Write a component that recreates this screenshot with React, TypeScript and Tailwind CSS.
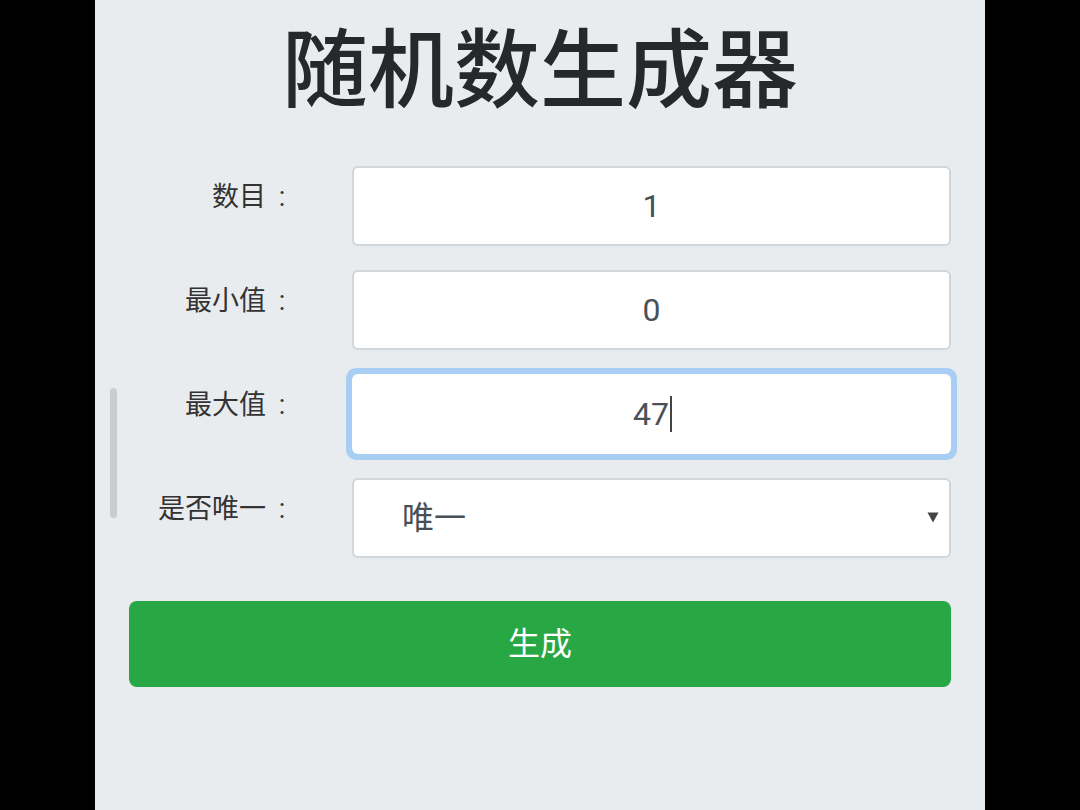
import React from "react";

const font = { fontFamily: '"Roboto", "Noto Sans CJK SC", sans-serif' };

const fields = [
  { label: "数目", value: "1" },
  { label: "最小值", value: "0" },
];

const Label = ({ text }: { text: string }) => (
  <div className="flex h-[80px] items-center justify-end pb-[18px] pr-[57px] text-[27px] text-[#333]">
    {text}
    <span className="inline-block w-[29px] pl-[3px] text-center">:</span>
  </div>
);

const App = () => {
  return (
    <div className="flex min-h-[810px] w-full justify-center bg-black" style={font}>
      <div className="relative w-[890px] bg-[#e9ecef] px-[34px] pt-[18px]">
        {/* scroll indicator */}
        <div className="absolute left-[15px] top-[388px] h-[130px] w-[7px] rounded-full bg-[#c9cdd1]" />

        <h1 className="text-center text-[86px] font-medium leading-[108px] text-[#26292c]">
          随机数生成器
        </h1>

        <div className="mt-[40px] grid grid-cols-[223px_599px] gap-y-[24px]">
          {fields.map((f) => (
            <React.Fragment key={f.label}>
              <Label text={f.label} />
              <input
                readOnly
                value={f.value}
                className="h-[80px] w-full rounded-[6px] border-2 border-[#d3d6d9] bg-white text-center text-[32px] text-[#495057] outline-none"
              />
            </React.Fragment>
          ))}

          <Label text="最大值" />
          <div className="-m-[6px] rounded-[10px] bg-[#a9cef4] p-[6px]">
            <div className="flex h-[80px] items-center justify-center rounded-[6px] bg-white text-[32px] text-[#495057]">
              <span className="pl-[2px]">47</span>
              <span className="ml-[1px] h-[36px] w-[2px] bg-[#444]" />
            </div>
          </div>

          <Label text="是否唯一" />
          <div className="relative">
            <select
              defaultValue="unique"
              className="h-[80px] w-full appearance-none rounded-[6px] border-2 border-[#d3d6d9] bg-white pl-[48px] text-[32px] text-[#495057] outline-none"
            >
              <option value="unique">唯一</option>
              <option value="repeat">可重复</option>
            </select>
            <svg
              className="pointer-events-none absolute right-[12px] top-[34px]"
              width="12"
              height="11"
              viewBox="0 0 12 11"
            >
              <path d="M0.5 0.5 H11.5 L6 10.5 Z" fill="#444" />
            </svg>
          </div>
        </div>

        <button className="mt-[43px] flex h-[86px] w-full items-center justify-center rounded-[8px] bg-[#28a745] text-[32px] text-white">
          生成
        </button>
      </div>
    </div>
  );
};

export default App;
